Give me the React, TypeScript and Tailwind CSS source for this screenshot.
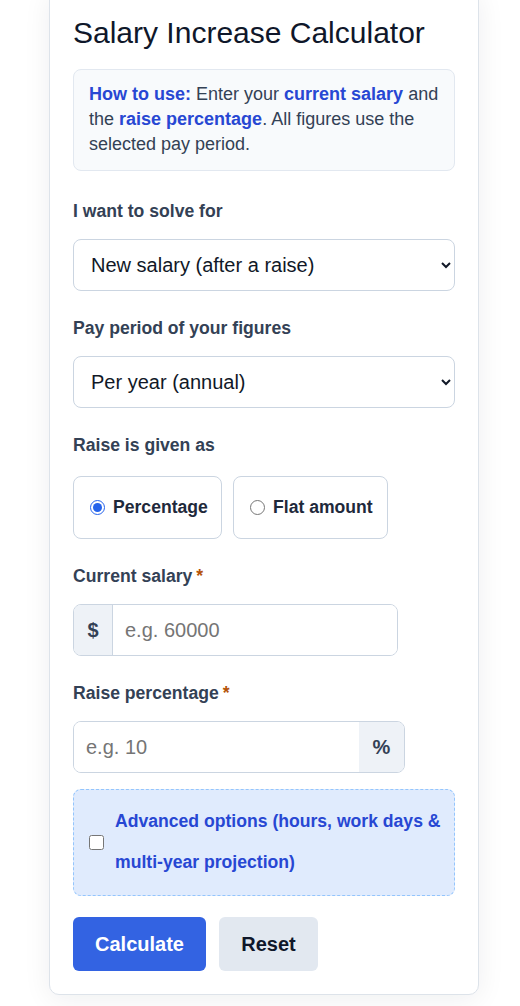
import { useState } from "react";

const font = { fontFamily: '"Liberation Sans", Arial, sans-serif' };

function FieldLabel({ children, required }: { children: React.ReactNode; required?: boolean }) {
  return (
    <label className="block text-[17.6px] font-bold leading-6 text-[#334155]">
      {children}
      {required && <span className="ml-1 text-[#b45309]">*</span>}
    </label>
  );
}

export default function App() {
  const [mode, setMode] = useState("percent");

  return (
    <div className="min-h-screen overflow-hidden bg-white" style={font}>
      <div className="-mt-[10px] ml-[49px] w-[430px] rounded-[10px] border border-[#dde3ea] bg-white px-[23px] pb-[23px] pt-[24px] shadow-[0_4px_28px_rgba(15,23,42,0.07)]">
        <h1 className="text-[30px] leading-[36px] text-[#0f172a]">Salary Increase Calculator</h1>

        <div className="mt-[18px] rounded-lg border border-[#e2e8f0] bg-[#f8fafc] py-3 pl-[15px] pr-[10px] text-[18px] leading-[1.4] text-[#334155]">
          <b className="text-[#2747d3]">How to use:</b> Enter your{" "}
          <b className="text-[#2747d3]">current salary</b> and the{" "}
          <b className="text-[#2747d3]">raise percentage</b>. All figures use the selected pay period.
        </div>

        <div className="mt-[28px]">
          <FieldLabel>I want to solve for</FieldLabel>
          <select className="mt-4 h-[52px] w-full rounded-lg border border-[#cbd5e1] bg-white pl-[13px] pr-[10px] text-[20px] text-[#111827]">
            <option>New salary (after a raise)</option>
            <option>Raise percentage</option>
            <option>Original salary</option>
          </select>
        </div>

        <div className="mt-[25px]">
          <FieldLabel>Pay period of your figures</FieldLabel>
          <select className="mt-4 h-[52px] w-full rounded-lg border border-[#cbd5e1] bg-white pl-[13px] pr-[10px] text-[20px] text-[#111827]">
            <option>Per year (annual)</option>
            <option>Per month</option>
            <option>Per week</option>
            <option>Per hour</option>
          </select>
        </div>

        <div className="mt-[25px]">
          <FieldLabel>Raise is given as</FieldLabel>
          <div className="mt-[19px] flex gap-[11px]">
            <label className="flex h-[63px] w-[149px] items-center gap-[8px] rounded-lg border border-[#cbd5e1] pl-[16px] pr-[14px] text-[17.6px] font-bold text-[#1e293b]">
              <input
                type="radio"
                name="mode"
                checked={mode === "percent"}
                onChange={() => setMode("percent")}
                className="h-[15px] w-[15px] shrink-0 accent-[#2563eb]"
              />
              Percentage
            </label>
            <label className="flex h-[63px] w-[155px] items-center gap-[8px] rounded-lg border border-[#cbd5e1] pl-[16px] pr-[14px] text-[17.6px] font-bold text-[#1e293b]">
              <input
                type="radio"
                name="mode"
                checked={mode === "flat"}
                onChange={() => setMode("flat")}
                className="h-[15px] w-[15px] shrink-0 accent-[#2563eb]"
              />
              Flat amount
            </label>
          </div>
        </div>

        <div className="mt-[25px]">
          <FieldLabel required>Current salary</FieldLabel>
          <div className="mt-4 flex h-[52px] w-[325px] overflow-hidden rounded-lg border border-[#cbd5e1]">
            <span className="flex w-[39px] items-center justify-center border-r border-[#cbd5e1] bg-[#eef2f7] text-[20px] font-bold text-[#334155]">
              $
            </span>
            <input
              placeholder="e.g. 60000"
              className="min-w-0 flex-1 bg-white px-[12px] text-[20px] text-[#0f172a] outline-none placeholder:text-[#757575]"
            />
          </div>
        </div>

        <div className="mt-[25px]">
          <FieldLabel required>Raise percentage</FieldLabel>
          <div className="mt-4 flex h-[52px] w-[332px] overflow-hidden rounded-lg border border-[#cbd5e1]">
            <input
              placeholder="e.g. 10"
              className="min-w-0 flex-1 bg-white px-[12px] text-[20px] text-[#0f172a] outline-none placeholder:text-[#757575]"
            />
            <span className="flex w-[45px] items-center justify-center bg-[#eef2f7] text-[20px] font-bold text-[#334155]">
              %
            </span>
          </div>
        </div>

        <label className="mt-4 flex h-[107px] items-center gap-[11px] rounded-lg border border-dashed border-[#93c5fd] bg-[#e0ebfd] pl-[15px] pr-[8px]">
          <input type="checkbox" className="h-[15px] w-[15px] shrink-0" />
          <span className="text-[17.6px] font-bold leading-[41px] text-[#2747d3]">
            Advanced options (hours, work days &amp; multi-year projection)
          </span>
        </label>

        <div className="mt-[21px] flex gap-[13px]">
          <button className="h-[54px] w-[133px] rounded-md bg-[#3363e2] text-[20px] font-bold text-white">
            Calculate
          </button>
          <button className="h-[54px] w-[99px] rounded-md bg-[#e2e8f0] text-[20px] font-bold text-[#0f172a]">
            Reset
          </button>
        </div>
      </div>
    </div>
  );
}
